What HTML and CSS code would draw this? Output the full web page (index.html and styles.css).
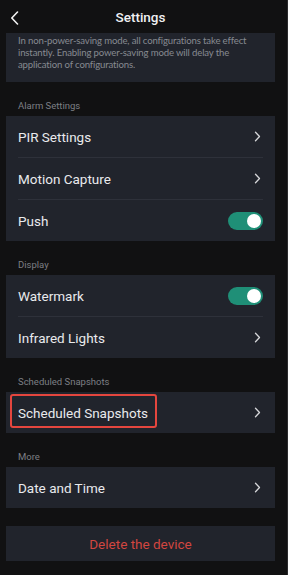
FILE: index.html
```html
<!DOCTYPE html>
<html>
<head>
<meta charset="utf-8">
<link rel="stylesheet" href="styles.css">
</head>
<body>
<div class="page">
  <header class="header">
    <svg class="back" width="9" height="14" viewBox="0 0 9 14"><path d="M7.5 1 L1.8 7 L7.5 13" fill="none" stroke="#f2f2f2" stroke-width="1.6" stroke-linecap="round" stroke-linejoin="round"/></svg>
    <div class="title">Settings</div>
  </header>

  <div class="info card">In non-power-saving mode, all configurations take effect instantly. Enabling power-saving mode will delay the application of configurations.</div>

  <div class="label">Alarm Settings</div>
  <div class="card">
    <div class="row"><span>PIR Settings</span><svg class="chev" width="7" height="11" viewBox="0 0 7 11"><path d="M1.5 1.2 L5.5 5.5 L1.5 9.8" fill="none" stroke="#d6d7da" stroke-width="1.3" stroke-linecap="round" stroke-linejoin="round"/></svg></div>
    <div class="row"><span>Motion Capture</span><svg class="chev" width="7" height="11" viewBox="0 0 7 11"><path d="M1.5 1.2 L5.5 5.5 L1.5 9.8" fill="none" stroke="#d6d7da" stroke-width="1.3" stroke-linecap="round" stroke-linejoin="round"/></svg></div>
    <div class="row"><span>Push</span><div class="toggle"><div class="knob"></div></div></div>
  </div>

  <div class="label">Display</div>
  <div class="card">
    <div class="row"><span>Watermark</span><div class="toggle"><div class="knob"></div></div></div>
    <div class="row"><span>Infrared Lights</span><svg class="chev" width="7" height="11" viewBox="0 0 7 11"><path d="M1.5 1.2 L5.5 5.5 L1.5 9.8" fill="none" stroke="#d6d7da" stroke-width="1.3" stroke-linecap="round" stroke-linejoin="round"/></svg></div>
  </div>

  <div class="label">Scheduled Snapshots</div>
  <div class="card hl-card">
    <div class="row"><span>Scheduled Snapshots</span><svg class="chev" width="7" height="11" viewBox="0 0 7 11"><path d="M1.5 1.2 L5.5 5.5 L1.5 9.8" fill="none" stroke="#d6d7da" stroke-width="1.3" stroke-linecap="round" stroke-linejoin="round"/></svg></div>
    <div class="highlight"></div>
  </div>

  <div class="label">More</div>
  <div class="card">
    <div class="row"><span>Date and Time</span><svg class="chev" width="7" height="11" viewBox="0 0 7 11"><path d="M1.5 1.2 L5.5 5.5 L1.5 9.8" fill="none" stroke="#d6d7da" stroke-width="1.3" stroke-linecap="round" stroke-linejoin="round"/></svg></div>
  </div>

  <div class="card delete">Delete the device</div>
</div>
</body>
</html>
```
FILE: styles.css
```css
html, body {
  margin: 0;
  padding: 0;
  background: #111112;
  height: 100%;
}
body {
  font-family: "Roboto", "Liberation Sans", sans-serif;
  color: #e8e9eb;
  border-right: 1px solid #2a2a2c;
  box-sizing: border-box;
}
.page {
  width: 281px;
  display: flex;
  flex-direction: column;
}
.header {
  height: 33px;
  display: flex;
  align-items: center;
  justify-content: center;
  position: relative;
}
.back {
  position: absolute;
  left: 10px;
  top: 11px;
}
.title {
  font-size: 13.5px;
  font-weight: 500;
  color: #f0f0f2;
  margin-top: 1px;
}
.card {
  background: #21242c;
  margin: 0 6px;
}
.info {
  padding: 2px 8px 11px 12px;
  font-family: "Lato", "Roboto", sans-serif;
  font-size: 9.6px;
  letter-spacing: -0.15px;
  line-height: 12px;
  color: #878a91;
}
.label {
  font-size: 9.5px;
  color: #7d7f84;
  line-height: 12px;
  padding: 0 18px;
  margin-top: 18px;
  margin-bottom: 4px;
}
.row {
  height: 41px;
  margin: 0 12px;
  display: flex;
  align-items: center;
  justify-content: space-between;
  font-size: 13.5px;
  color: #e9eaec;
  border-bottom: 1px solid #2e313a;
}
.row:last-child, .hl-card .row {
  border-bottom: none;
}
.chev {
  margin-right: 2px;
}
.toggle {
  width: 35px;
  height: 18px;
  border-radius: 9px;
  background: #1f8f77;
  display: flex;
  align-items: center;
  justify-content: flex-end;
  padding-right: 2px;
  box-sizing: border-box;
}
.knob {
  width: 14px;
  height: 14px;
  border-radius: 50%;
  background: #ffffff;
}
.hl-card {
  position: relative;
}
.highlight {
  position: absolute;
  left: 4px;
  top: 2px;
  width: 147px;
  height: 34px;
  border: 2px solid #e4463e;
  border-radius: 3px;
  box-sizing: border-box;
}
.delete {
  margin-top: 18px;
  height: 35px;
  display: flex;
  align-items: center;
  justify-content: center;
  font-size: 13.5px;
  color: #d24640;
}
```
